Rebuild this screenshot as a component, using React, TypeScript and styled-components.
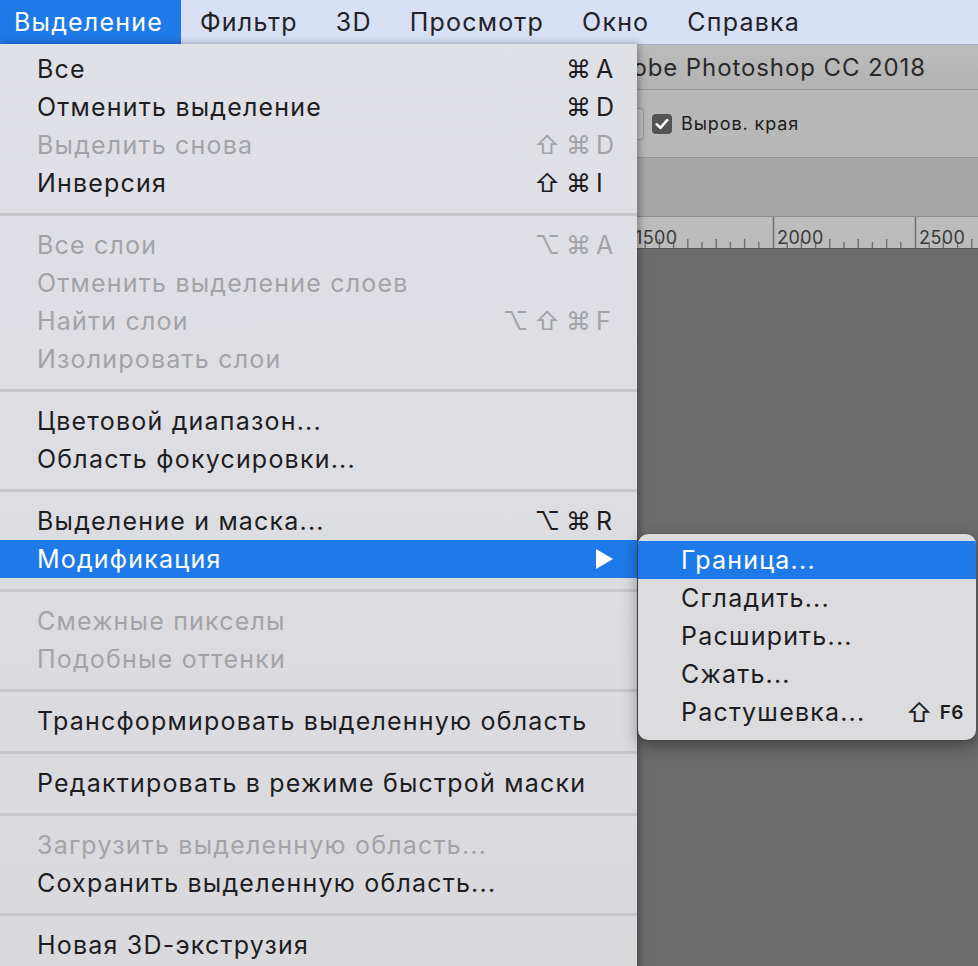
import React from 'react'
import styled, { createGlobalStyle } from 'styled-components'

const GlobalStyle = createGlobalStyle`
  html, body {
    margin: 0;
    padding: 0;
  }
  body {
    width: 978px;
    height: 966px;
    overflow: hidden;
    background: #6c6c6c;
    font-family: Inter, "Liberation Sans", "DejaVu Sans", sans-serif;
    -webkit-font-smoothing: antialiased;
  }
`

type Item = {
    label: string
    mods?: string
    key?: string
    disabled?: boolean
    active?: boolean
    submenu?: boolean
}

const groups: Item[][] = [
    [
        {label: 'Все', mods: '⌘', key: 'A'},
        {label: 'Отменить выделение', mods: '⌘', key: 'D'},
        {label: 'Выделить снова', mods: '⇧⌘', key: 'D', disabled: true},
        {label: 'Инверсия', mods: '⇧⌘', key: 'I'},
    ],
    [
        {label: 'Все слои', mods: '⌥⌘', key: 'A', disabled: true},
        {label: 'Отменить выделение слоев', disabled: true},
        {label: 'Найти слои', mods: '⌥⇧⌘', key: 'F', disabled: true},
        {label: 'Изолировать слои', disabled: true},
    ],
    [
        {label: 'Цветовой диапазон...'},
        {label: 'Область фокусировки...'},
    ],
    [
        {label: 'Выделение и маска...', mods: '⌥⌘', key: 'R'},
        {label: 'Модификация', active: true, submenu: true},
    ],
    [
        {label: 'Смежные пикселы', disabled: true},
        {label: 'Подобные оттенки', disabled: true},
    ],
    [
        {label: 'Трансформировать выделенную область'},
    ],
    [
        {label: 'Редактировать в режиме быстрой маски'},
    ],
    [
        {label: 'Загрузить выделенную область...', disabled: true},
        {label: 'Сохранить выделенную область...'},
    ],
    [
        {label: 'Новая 3D-экструзия'},
    ],
]

const subItems = [
    {label: 'Граница...', active: true},
    {label: 'Сгладить...'},
    {label: 'Расширить...'},
    {label: 'Сжать...'},
    {label: 'Растушевка...', shortcut: 'F6'},
]

const menuTitles = ['Выделение', 'Фильтр', '3D', 'Просмотр', 'Окно', 'Справка']

// ruler: 500 units every 142px, major tick at x=631 is 1500
const Ruler = () => {
    const ticks = []
    const labels = []
    const step = 142
    for (let m = -1; m <= 2; m++) {
        const x = 631 + m * step
        ticks.push(<line key={'M' + m} x1={x + 0.5} x2={x + 0.5} y1={0} y2={31} stroke="#6e6e6e" strokeWidth={1.5}/>)
        if (m >= 0) {
            labels.push(
                <text key={'L' + m} x={x + 4} y={27} fontSize={18} fill="#3a3a3a" letterSpacing={0.4}
                      fontFamily='Inter, "Liberation Sans", sans-serif'>
                    {1500 + m * 500}
                </text>
            )
        }
        for (let i = 1; i < 10; i++) {
            const tx = x + (step / 10) * i
            const h = i % 2 === 0 ? 9 : 6
            ticks.push(<line key={'t' + m + i} x1={tx} x2={tx} y1={31 - h} y2={31} stroke="#6e6e6e" strokeWidth={1.4}/>)
        }
    }
    return (
        <RulerBar>
            <svg width="978" height="31" viewBox="0 0 978 31">
                {ticks}
                {labels}
            </svg>
        </RulerBar>
    )
}

const Check = () => (
    <CheckBox>
        <svg width="14" height="12" viewBox="0 0 14 12">
            <path d="M1.8 6.4 L5.4 9.8 L12.2 2.2" fill="none" stroke="#fff" strokeWidth="2.6"
                  strokeLinecap="round" strokeLinejoin="round"/>
        </svg>
    </CheckBox>
)

const App = () => {
    return (
        <>
            <GlobalStyle/>
            <Screen>
                <MenuBar>
                    {menuTitles.map((t, i) => (
                        <MenuTitle key={t} $active={i === 0} $first={i === 0}>{t}</MenuTitle>
                    ))}
                </MenuBar>
                <Workspace>
                    <TitleBar>Adobe Photoshop CC 2018</TitleBar>
                    <OptionsBar>
                        <FieldStub/>
                        <Check/>
                        <OptionLabel>Выров. края</OptionLabel>
                    </OptionsBar>
                    <TabBand/>
                    <Ruler/>
                    <Canvas/>
                </Workspace>

                <DropMenu>
                    {groups.map((g, gi) => (
                        <React.Fragment key={gi}>
                            {gi > 0 && <Separator/>}
                            {g.map(item => (
                                <Row key={item.label} $disabled={item.disabled} $active={item.active}>
                                    <Label>{item.label}</Label>
                                    {item.key && (
                                        <Shortcut>
                                            <Mods>{item.mods}</Mods>
                                            <Key>{item.key}</Key>
                                        </Shortcut>
                                    )}
                                    {item.submenu && <Arrow/>}
                                </Row>
                            ))}
                        </React.Fragment>
                    ))}
                </DropMenu>

                <SubMenu>
                    {subItems.map(item => (
                        <SubRow key={item.label} $active={item.active}>
                            <Label>{item.label}</Label>
                            {item.shortcut && (
                                <SubShortcut>
                                    <ShiftGlyph>⇧</ShiftGlyph>
                                    <FKey>{item.shortcut}</FKey>
                                </SubShortcut>
                            )}
                        </SubRow>
                    ))}
                </SubMenu>
            </Screen>
        </>
    )
}

export default App

const Screen = styled.div`
    position: relative;
    width: 978px;
    height: 966px;
    overflow: hidden;
    display: flex;
    flex-direction: column;
`

const MenuBar = styled.div`
    display: flex;
    height: 45px;
    box-sizing: border-box;
    background: #d8e0f5;
    border-bottom: 1px solid #a9afbf;
    flex-shrink: 0;
`

const MenuTitle = styled.div<{ $active?: boolean; $first?: boolean }>`
    height: 44px;
    line-height: 44px;
    padding: 0 ${p => (p.$first ? '18px' : '19px')} 0 ${p => (p.$first ? '14px' : '19px')};
    font-size: 25px;
    letter-spacing: 1.2px;
    color: ${p => (p.$active ? '#ffffff' : '#222226')};
    background: ${p => (p.$active ? '#1f7ae9' : 'transparent')};
`

const Workspace = styled.div`
    flex: 1;
    display: flex;
    flex-direction: column;
`

const TitleBar = styled.div`
    height: 45px;
    box-sizing: border-box;
    display: flex;
    align-items: center;
    justify-content: flex-end;
    padding-right: 52px;
    font-size: 24px;
    letter-spacing: 0.9px;
    color: #2a2a2a;
    background: linear-gradient(#bcbcbc, #b3b3b3);
    border-bottom: 1px solid #989898;
`

const OptionsBar = styled.div`
    height: 68px;
    box-sizing: border-box;
    display: flex;
    align-items: center;
    padding-left: 560px;
    background: #b8b8b8;
    border-bottom: 1px solid #959595;
`

const FieldStub = styled.div`
    width: 84px;
    height: 32px;
    box-sizing: border-box;
    background: #c2c2c2;
    border: 1px solid #9a9a9a;
    border-radius: 3px;
`

const CheckBox = styled.div`
    width: 20px;
    height: 20px;
    margin-left: 8px;
    border-radius: 4px;
    background: #545454;
    display: flex;
    align-items: center;
    justify-content: center;
`

const OptionLabel = styled.span`
    margin-left: 9px;
    font-size: 18px;
    letter-spacing: 0.9px;
    color: #1c1c1c;
`

const TabBand = styled.div`
    height: 59px;
    box-sizing: border-box;
    background: #a6a6a6;
    border-bottom: 1px solid #8c8c8c;
`

const RulerBar = styled.div`
    height: 31px;
    background: #bcbcbc;
    border-bottom: 1px solid #5a5a5a;
    svg {
        display: block;
    }
`

const Canvas = styled.div`
    flex: 1;
    background: #6c6c6c;
`

const DropMenu = styled.div`
    position: absolute;
    top: 44px;
    left: 0;
    width: 637px;
    height: 940px;
    box-sizing: border-box;
    padding-top: 6px;
    background: linear-gradient(#e0e1e7, #d9d9dc);
    box-shadow: 2px 0 8px rgba(0, 0, 0, 0.35);
`

const Row = styled.div<{ $disabled?: boolean; $active?: boolean }>`
    height: 38px;
    display: flex;
    align-items: center;
    padding: 0 17px 0 37px;
    font-size: 25px;
    letter-spacing: 1.2px;
    color: ${p => (p.$active ? '#ffffff' : p.$disabled ? '#a3a3a7' : '#1d1d1f')};
    background: ${p => (p.$active ? '#1f7ae9' : 'transparent')};
`

const Label = styled.span`
    flex: 1;
    white-space: nowrap;
`

const Shortcut = styled.span`
    display: flex;
    align-items: center;
`

const Mods = styled.span`
    letter-spacing: 6px;
    font-family: Inter, "DejaVu Sans", sans-serif;
`

const Key = styled.span`
    width: 24px;
    margin-left: -1px;
`

const Arrow = styled.span`
    width: 0;
    height: 0;
    margin-right: 7px;
    border-left: 17px solid #ffffff;
    border-top: 10px solid transparent;
    border-bottom: 10px solid transparent;
`

const Separator = styled.div`
    height: 24px;
    display: flex;
    align-items: center;
    &::after {
        content: '';
        flex: 1;
        height: 3px;
        background: #c7c7cb;
    }
`

const SubMenu = styled.div`
    position: absolute;
    top: 534px;
    left: 638px;
    width: 338px;
    box-sizing: border-box;
    padding: 7px 0 9px;
    border-radius: 10px;
    background: #dcdcdf;
    box-shadow: 0 6px 16px rgba(0, 0, 0, 0.4), 0 0 0 1px rgba(0, 0, 0, 0.08);
    overflow: hidden;
`

const SubRow = styled.div<{ $active?: boolean }>`
    height: 38px;
    display: flex;
    align-items: center;
    padding: 0 12px 0 43px;
    font-size: 25px;
    letter-spacing: 1.2px;
    color: ${p => (p.$active ? '#ffffff' : '#1d1d1f')};
    background: ${p => (p.$active ? '#1f7ae9' : 'transparent')};
`

const SubShortcut = styled.span`
    display: flex;
    align-items: center;
`

const ShiftGlyph = styled.span`
    font-size: 26px;
    letter-spacing: 0;
    font-family: Inter, "DejaVu Sans", sans-serif;
`

const FKey = styled.span`
    margin-left: 7px;
    font-size: 19px;
    font-weight: 600;
    letter-spacing: 0.5px;
`
